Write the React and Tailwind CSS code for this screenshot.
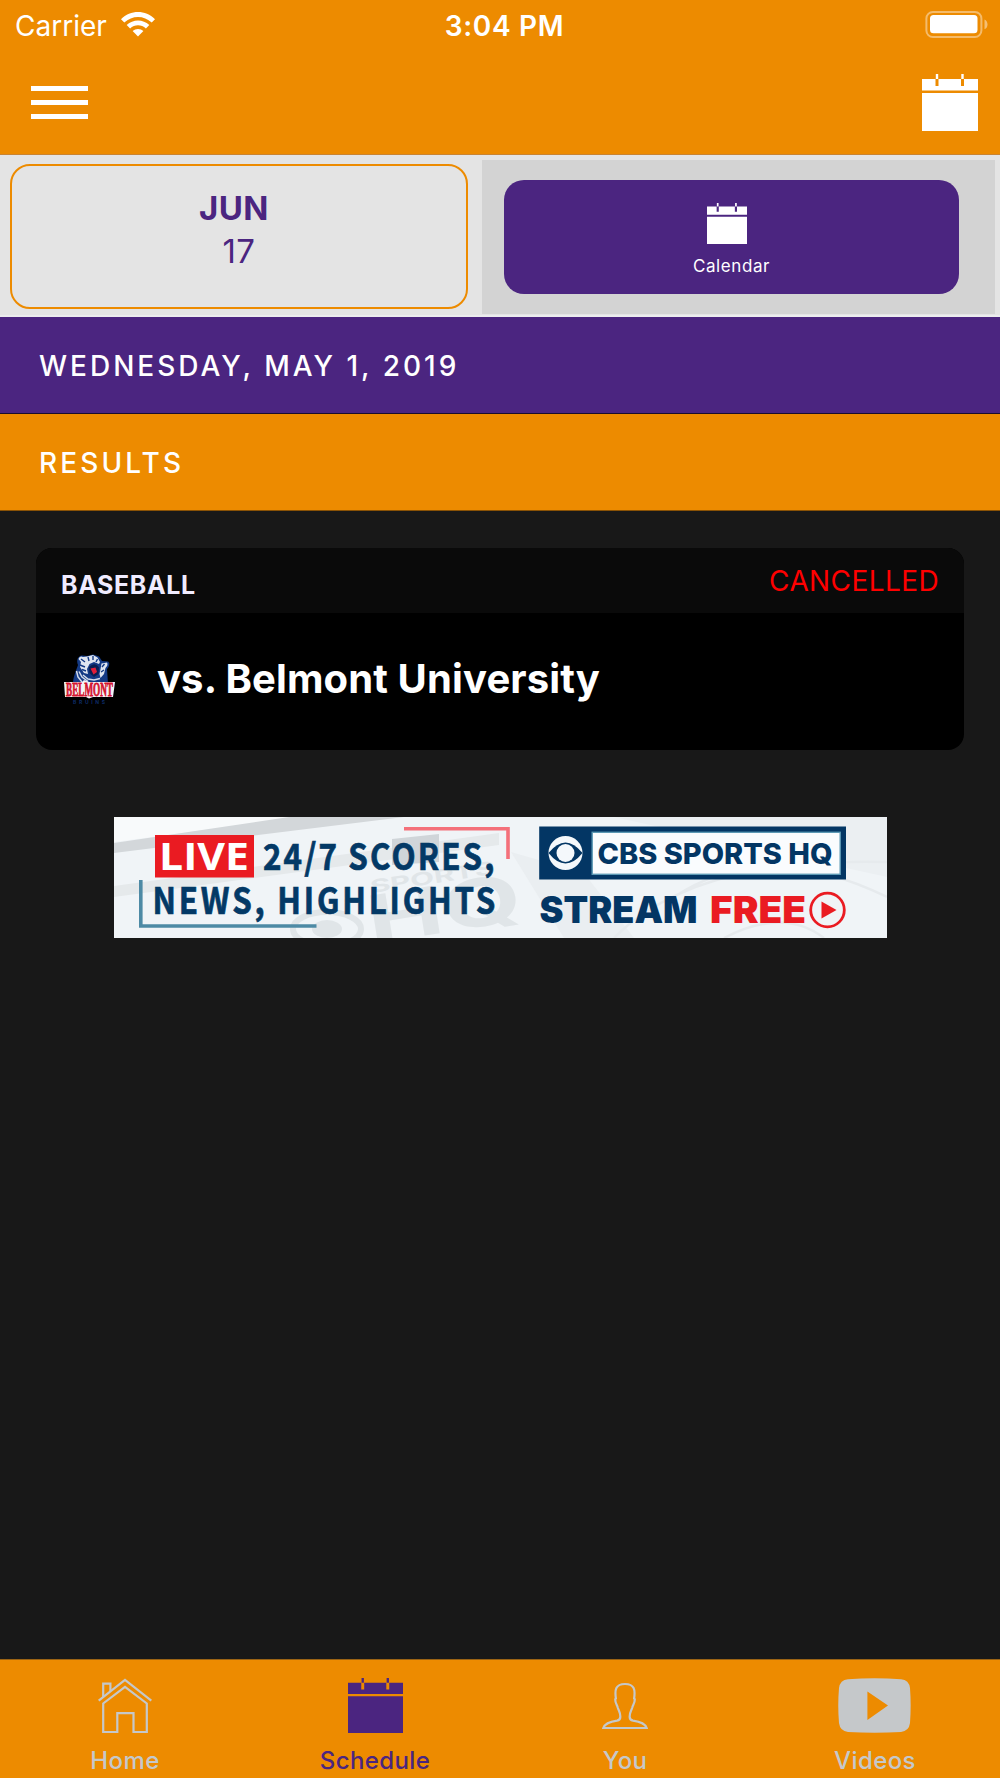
import React from "react";

const CalendarIcon = ({ className }) => (
  <svg viewBox="0 0 56 57" className={className} fill="currentColor" preserveAspectRatio="none">
    <path d="M0 5H13.5V12H16.5V5H39V12H42V5H56V16.5H0Z" />
    <path d="M13.8 0H16.2V5H13.8ZM39.3 0H41.7V5H39.3ZM0 19H56V57H0Z" />
  </svg>
);

const WifiIcon = () => (
  <svg viewBox="0 0 34 25" className="ml-[14px] mt-[12px] h-[25px] w-[34px]" fill="white">
    <path d="M0 7.2C9.5-2.4 24.5-2.4 34 7.2L30.7 10.6C23 3 11 3 3.3 10.6Z" />
    <path d="M5.7 13.1C12 7 22 7 28.3 13.1L24.9 16.5C20.4 12.3 13.6 12.3 9.1 16.5Z" />
    <path d="M11.6 19C14.6 16.2 19.4 16.2 22.4 19L17 24.6Z" />
  </svg>
);

const BatteryIcon = () => (
  <svg viewBox="0 0 63 28" className="mr-[12px] mt-[10px] h-[28px] w-[63px]">
    <rect x="1.4" y="2" width="55" height="25" rx="6.5" fill="none" stroke="white" strokeOpacity="0.42" strokeWidth="2" />
    <rect x="5" y="5" width="47.5" height="18.3" rx="3.5" fill="white" />
    <path d="M59.5 9.5C63.5 11 63.5 18 59.5 19.3Z" fill="white" fillOpacity="0.45" />
  </svg>
);

const HomeIcon = () => (
  <svg viewBox="0 0 54 55" className="h-[55px] w-[54px]" fill="none" stroke="currentColor" strokeWidth="2.2">
    <path d="M.7 22.7L27 2L53.3 22.7" />
    <path d="M5.2 19V5.7H12.4V13" />
    <path d="M5.2 54V25.5L27 8.8L48.8 25.5V54H35.5V35.2H19.3V54Z" />
  </svg>
);

const PersonIcon = () => (
  <svg viewBox="0 0 46 55" className="h-[55px] w-[46px]" fill="none" stroke="currentColor" strokeWidth="2.2">
    <path d="M1.3 50H44.7C43.5 46.5 38.5 43.6 31 42.6C28.5 42.2 27.5 40.8 27.7 38.3C27.7 34 29.2 33 30.3 29.5C30.7 27.2 32.8 25.5 32.8 21.2L32.1 20.5C33.4 12 32.5 6 23 6C13.5 6 12.6 12 13.9 20.5L13.2 21.2C13.2 25.5 15.3 27.2 15.7 29.5C16.8 33 18.3 34 18.3 38.3C18.5 40.8 17.5 42.2 15 42.6C7.5 43.6 2.5 46.5 1.3 50Z" />
  </svg>
);

const VideoIcon = () => (
  <svg viewBox="0 0 73 55" className="mr-[2px] h-[55px] w-[73px]" fill="currentColor">
    <path
      fillRule="evenodd"
      d="M10 1.2Q36.5-.5 63 1.2Q71 2 72 10Q73.3 27.5 72 45Q71 53 63 54Q36.5 55.5 10 54Q2 53 1 45Q-.5 27.5 1 10Q2 2 10 1.2ZM29.4 13.5V42L50 27.5Z"
    />
  </svg>
);

const BelmontLogo = () => (
  <svg viewBox="0 0 52 52" className="mb-[4px] ml-[28px] h-[52px] w-[52px] overflow-visible">
    <path d="M9 30C9 23 12 17 14 11C12 6 14 2 18 1.5L23 2L29 .5L35 2.5L38 7L44 7.5C46.5 9 45 13 43 15L44 30Z" fill="#143a85" />
    {/* head */}
    <path d="M14.5 5Q16 1.500 19 3L23 2.500L29 1L33.500 3.500L36 8L35 10L30 8L25.500 10L23 15L24 20L20 19L16 13L17 8Z" fill="#dfe5f0" />
    <path d="M37.500 9.500L43 8.500Q44.500 11 41.500 14L40 20L36.500 24L35.500 20L36.500 15Z" fill="#dfe5f0" />
    <path d="M17 5L21 8M24 3L25 7M29 2L29 6M33.500 5L32 8M40.500 10L38 13M16 11L21 13M18 15.500L22 17M40 16L37 18" stroke="#143a85" strokeWidth="1.4" />
    {/* fur */}
    <path d="M12.500 17L14 23L18 28M15 17.500L18 23L24 27.500M19 21L24 25L30 26L36 24.500" fill="none" stroke="#d3dbe9" strokeWidth="1.5" />
    <path d="M25 13Q31 7.500 35 13.500L34.500 20L30 23L25.500 19Z" fill="#0a1f52" />
    <path d="M26.500 14.500L31.500 13.500L33 18L29.500 20.500Z" fill="#e01f3a" />
    <path d="M0 28H18L20 26L25 28H51L49 43H29L25 44.500L22 43H1Z" fill="#f2f3f7" />
    <text x="2" y="41.500" textLength="47" lengthAdjust="spacingAndGlyphs" fill="#d4142f" stroke="#d4142f" strokeWidth="0.8" className="font-['Liberation_Serif',serif] text-[18px] font-bold">
      BELMONT
    </text>
    <text x="9" y="49.500" textLength="32" fill="#0d2b66" className="font-['Inter',sans-serif] text-[5px] font-bold">
      BRUINS
    </text>
  </svg>
);

const AdBanner = () => (
  <svg viewBox="0 0 773 121" className="ml-[113.5px] mt-[66.5px] h-[121px] w-[773px]">
    <rect width="773" height="121" fill="#f0f4f7" />
    <path d="M0 0H500L773 60V0Z" fill="#ebeff2" />
    <path d="M0 0H190L0 25Z" fill="#f8fafb" />
    <path d="M0 26L175 0H290L0 36Z" fill="#d3d7da" />
    <path d="M0 69L385 16V28L0 80Z" fill="#e5e9eb" />
    <path d="M278 22L325 17V45L278 48Z" fill="#d0d5d9" />
    <path d="M397 35L450 121H520L470 56Z" fill="#eaeef1" />
    <g fill="none" stroke="#e6eaed" strokeWidth="2.5">
      <path d="M500 121Q580 40 773 45M560 80Q650 20 773 80M610 121Q670 90 710 121" />
      <ellipse cx="213" cy="112" rx="34" ry="17" stroke="#e0e5e8" strokeWidth="6" />
    </g>
    <ellipse cx="213" cy="112" rx="15" ry="9" fill="#e0e5e8" />
    <g transform="rotate(-9 250 120)" fill="#e0e5e8" className="font-['Inter',sans-serif] font-bold">
      <text x="256" y="128" textLength="155" lengthAdjust="spacingAndGlyphs" className="text-[66px]">HQ</text>
      <text x="264" y="78" textLength="126" lengthAdjust="spacingAndGlyphs" className="text-[18px]">SPORTS</text>
    </g>

    <path d="M290 11.8H394V42" fill="none" stroke="#f4707a" strokeWidth="3.6" />
    <path d="M26.8 63V109H202.5" fill="none" stroke="#4d8aa5" strokeWidth="3.6" />
    <rect x="41" y="18" width="99" height="42.5" fill="#ea1b22" />
    <g fill="#033966" stroke="#033966" strokeWidth="0.7" className="font-['Noto_Sans_CJK_SC',sans-serif] text-[36px] font-bold">
      <text transform="translate(149 53) scale(0.87 1)" textLength="266">24/7 SCORES,</text>
      <text transform="translate(38.5 96.5) scale(0.87 1)" textLength="394">NEWS, HIGHLIGHTS</text>
    </g>
    <text x="45" y="53" textLength="90" lengthAdjust="spacingAndGlyphs" fill="white" className="font-['Open_Sans',sans-serif] text-[37px] font-bold">
      LIVE
    </text>

    <rect x="425.2" y="9.5" width="306.8" height="53" fill="#033664" />
    <rect x="478.2" y="15.3" width="248" height="42" fill="#fafcfe" stroke="#5d9ab5" strokeWidth="1.4" />
    <circle cx="451.5" cy="36" r="17" fill="#f4f8fb" />
    <path d="M434.5 36Q451.5 15 468.5 36Q451.5 57 434.5 36Z" fill="#033664" />
    <circle cx="451.5" cy="36" r="9" fill="#f4f8fb" />
    <text x="483.5" y="47.3" textLength="235" lengthAdjust="spacingAndGlyphs" fill="#033664" className="font-['Inter',sans-serif] text-[29px] font-extrabold">
      CBS SPORTS HQ
    </text>
    <g className="font-['Inter',sans-serif] text-[37px] font-black">
      <text x="425.5" y="106" textLength="158" lengthAdjust="spacingAndGlyphs" fill="#033664">STREAM</text>
      <text x="596" y="106" textLength="96" lengthAdjust="spacingAndGlyphs" fill="#ea1b22">FREE</text>
    </g>
    <circle cx="713.5" cy="93" r="16.8" fill="none" stroke="#ea1b22" strokeWidth="2.8" />
    <path d="M707.5 84.5V101.5L722.5 93Z" fill="#ea1b22" />
  </svg>
);

const tabs = [
  { label: "Home", icon: <HomeIcon /> },
  { label: "Schedule", icon: <CalendarIcon className="h-[55px] w-[55px]" />, active: true },
  { label: "You", icon: <PersonIcon /> },
  { label: "Videos", icon: <VideoIcon /> },
];

const App = () => {
  return (
    <div className="flex h-[1778px] w-[1000px] flex-col overflow-hidden bg-[#181818] font-['Inter',sans-serif] text-white">
      <header className="h-[155px] border-b border-[#c98433] bg-[#ed8b00]">
        <div className="grid h-[50px] grid-cols-3">
          <div className="flex">
            <span className="pl-[15px] pt-[9px] text-[28px] leading-[34px]">Carrier</span>
            <WifiIcon />
          </div>
          <div className="pl-[9px] pt-[9px] text-center text-[28px] font-semibold leading-[34px] tracking-[0.7px]">3:04 PM</div>
          <div className="flex justify-end">
            <BatteryIcon />
          </div>
        </div>
        <div className="flex items-start justify-between pl-[31px] pr-[22px] pt-[24px]">
          <button className="mt-[12px] flex w-[57px] flex-col gap-[9px]">
            <span className="h-[5px] w-full bg-white" />
            <span className="h-[5px] w-full bg-white" />
            <span className="h-[5px] w-full bg-white" />
          </button>
          <CalendarIcon className="h-[57px] w-[56px]" />
        </div>
      </header>

      <div className="flex h-[162px] border-b-2 border-[#ececee] bg-[#e4e4e4] text-[#4b2580]">
        <div className="ml-[10px] mt-[9px] h-[145px] w-[458px] rounded-[20px] border-2 border-[#ed8b00] pt-[22px] text-center">
          <div className="pr-[10px] text-[33px] font-bold leading-[40px] tracking-[0.4px]">JUN</div>
          <div className="pt-[3px] text-[33px] leading-[40px] tracking-[0.5px]">17</div>
        </div>
        <div className="ml-[14px] mt-[5px] h-[154px] w-[513px] bg-[#d3d3d3] pl-[22px] pt-[20px]">
          <button className="flex h-[114px] w-[455px] flex-col items-center rounded-[20px] bg-[#4b2580] pt-[23px] text-white">
            <CalendarIcon className="mr-[10px] h-[41px] w-[40px]" />
            <span className="mt-[11px] text-[17px] leading-[22px] tracking-[0.6px]">Calendar</span>
          </button>
        </div>
      </div>

      <h2 className="h-[97px] border-b border-[#1a0d2c] bg-[#4b2580] pl-[39px] pt-[32px] text-[28px] font-medium leading-[34px] tracking-[3px]">
        WEDNESDAY, MAY 1, 2019
      </h2>
      <h3 className="h-[97px] border-b border-[#8a5205] bg-[#ed8b00] pl-[39px] pt-[32px] text-[28px] font-medium leading-[34px] tracking-[3.1px]">
        RESULTS
      </h3>

      <main className="flex-1">
        <section className="ml-[36px] mt-[37px] h-[202px] w-[928px] overflow-hidden rounded-[16px] bg-black">
          <div className="flex h-[65px] justify-between bg-[#0a0a0a] px-[25px]">
            <span className="pt-[22px] text-[25px] font-bold leading-[30px] tracking-[0.6px] text-[#f0ecff]">BASEBALL</span>
            <span className="pt-[16px] text-[28px] leading-[34px] tracking-[0.4px] text-[#ff0000]">CANCELLED</span>
          </div>
          <div className="flex h-[137px] items-center">
            <BelmontLogo />
            <span className="ml-[41px] pb-[6px] text-[40px] font-bold leading-[48px] tracking-[0.12px]">vs. Belmont University</span>
          </div>
        </section>
        <AdBanner />
      </main>

      <nav className="grid h-[119px] grid-cols-4 border-t border-[#9b6314] bg-[#ed8b00]">
        {tabs.map((tab) => (
          <div
            key={tab.label}
            className={`flex flex-col items-center pt-[18px] ${tab.active ? "text-[#4b2580]" : "text-[#c5c8ca]"}`}
          >
            {tab.icon}
            <span className="mt-[13px] text-[24px] font-medium leading-[30px] tracking-[0.4px]">{tab.label}</span>
          </div>
        ))}
      </nav>
    </div>
  );
};

export default App;
